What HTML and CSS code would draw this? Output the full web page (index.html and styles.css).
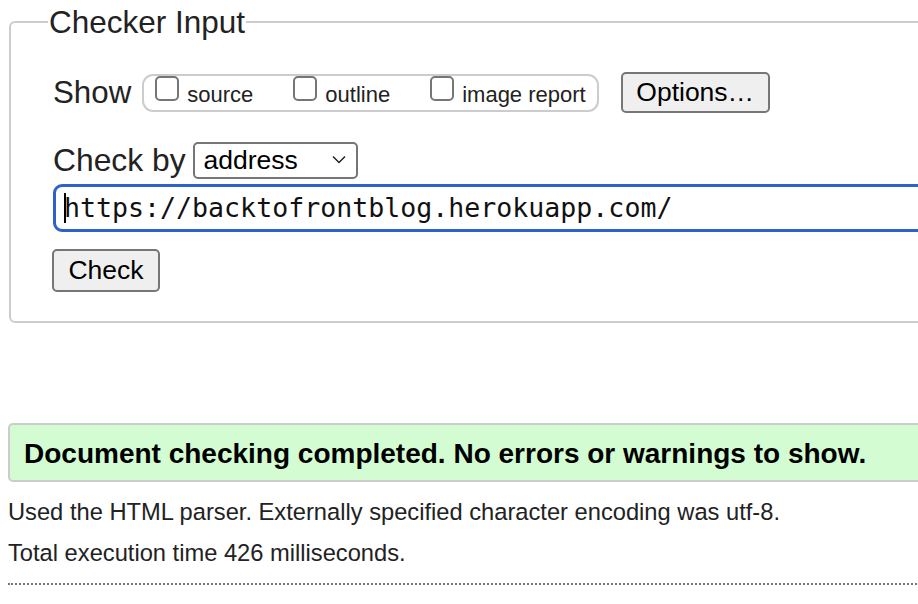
FILE: index.html
```html
<!DOCTYPE html>
<html lang="en">
<head>
<meta charset="utf-8">
<title>Nu Html Checker</title>
<link rel="stylesheet" href="styles.css">
</head>
<body>
<div class="page">
  <form class="checker">
    <fieldset class="input-set">
      <legend class="legend">Checker Input</legend>
      <div class="row show-row">
        <span class="label">Show</span>
        <div class="show-group">
          <label class="opt"><span class="box"></span><span class="opt-text">source</span></label>
          <label class="opt"><span class="box"></span><span class="opt-text">outline</span></label>
          <label class="opt"><span class="box"></span><span class="opt-text">image report</span></label>
        </div>
        <button type="button" class="btn btn-options">Options…</button>
      </div>
      <div class="row by-row">
        <span class="label label-by">Check by</span>
        <div class="select">
          <span class="select-text">address</span>
          <svg class="chev" width="14" height="9" viewBox="0 0 14 9"><path d="M1 1.5 L7 7.5 L13 1.5" fill="none" stroke="#222" stroke-width="1.5"/></svg>
        </div>
      </div>
      <div class="urlbox"><span class="caret"></span>https://backtofrontblog.herokuapp.com/</div>
      <div class="row check-row">
        <button type="button" class="btn btn-check">Check</button>
      </div>
    </fieldset>
  </form>

  <div class="success">
    <p class="success-text">Document checking completed. No errors or warnings to show.</p>
  </div>
  <div class="details-block">
    <p class="details">Used the HTML parser. Externally specified character encoding was utf-8.</p>
    <p class="details">Total execution time 426 milliseconds.</p>
  </div>
  <hr class="dotted">
</div>
</body>
</html>
```

FILE: styles.css
```css
html, body {
  margin: 0;
  padding: 0;
  overflow: hidden;
  background: #fff;
}

.page {
  width: 1100px;
  font-family: "Liberation Sans", Arial, Helvetica, sans-serif;
  color: #222;
  padding-top: 5px;
}

.checker {
  margin: 0 0 0 9px;
}

.input-set {
  margin: 0;
  border: 2px solid #ccc;
  border-radius: 6px;
  padding: 0 0 29px 42px;
}

.legend {
  font-size: 31.5px;
  line-height: 34px;
  padding: 0 1px;
  margin-left: -5px;
  color: #222;
}

.row {
  display: flex;
  align-items: center;
}

.label {
  font-size: 31.3px;
}

.label-by {
  font-size: 31.8px;
}

.show-row {
  margin-top: 33px;
  height: 41px;
}

.show-group {
  display: flex;
  align-items: center;
  height: 34px;
  margin-left: 11px;
  padding: 0 11px 0 11px;
  border: 2px solid #ccc;
  border-radius: 11px;
  gap: 40px;
}

.opt {
  display: flex;
  align-items: center;
  font-size: 22px;
}

.box {
  width: 20px;
  height: 21px;
  border: 2px solid #767676;
  border-radius: 5px;
  background: #fff;
  margin-right: 8px;
  position: relative;
  top: -4px;
}

.opt-text {
  position: relative;
  top: 2px;
}

.btn {
  font-family: "Liberation Sans", Arial, Helvetica, sans-serif;
  font-size: 26.5px;
  color: #000;
  background: #efefef;
  border: 2px solid #767676;
  border-radius: 5px;
  padding: 0;
}

.btn-options {
  margin-left: 22px;
  width: 149px;
  height: 41px;
}

.by-row {
  margin-top: 29px;
  height: 37px;
}

.select {
  display: flex;
  align-items: center;
  justify-content: space-between;
  margin-left: 7px;
  height: 33px;
  border: 2px solid #767676;
  border-radius: 5px;
  padding: 0 10px 0 9px;
  box-sizing: content-box;
  width: 142px;
  font-size: 26.5px;
  color: #000;
}

.chev {
  position: relative;
  top: -1px;
}

.urlbox {
  margin-top: 5px;
  height: 42px;
  border: 3.5px solid #2d62c8;
  border-radius: 9px;
  padding-left: 8px;
  font-family: "DejaVu Sans Mono", monospace;
  font-size: 26.6px;
  line-height: 42px;
  color: #111;
  white-space: nowrap;
  display: flex;
  align-items: center;
}

.caret {
  display: inline-block;
  width: 1.5px;
  height: 30px;
  background: #000;
  margin-right: -1.5px;
}

.check-row {
  margin-top: 17px;
}

.btn-check {
  width: 108px;
  height: 43px;
  margin-left: -1px;
}

.success {
  margin: 100px 0 0 8px;
  height: 55px;
  border: 2px solid #ccc;
  border-radius: 5px;
  background: #d4fcd2;
  display: flex;
  align-items: center;
  padding-left: 14px;
}

.success-text {
  margin: 0;
  font-weight: bold;
  font-size: 28px;
  color: #000;
  position: relative;
  top: 1px;
}

.details-block {
  display: flex;
  flex-direction: column;
  gap: 8px;
  margin: 14px 0 0 8px;
}

.details {
  margin: 0;
  font-size: 23.7px;
  line-height: 33px;
  color: #222;
}

.dotted {
  margin: 13px 0 0 8px;
  border: 0;
  border-top: 2px dotted #777;
  height: 0;
}
```
